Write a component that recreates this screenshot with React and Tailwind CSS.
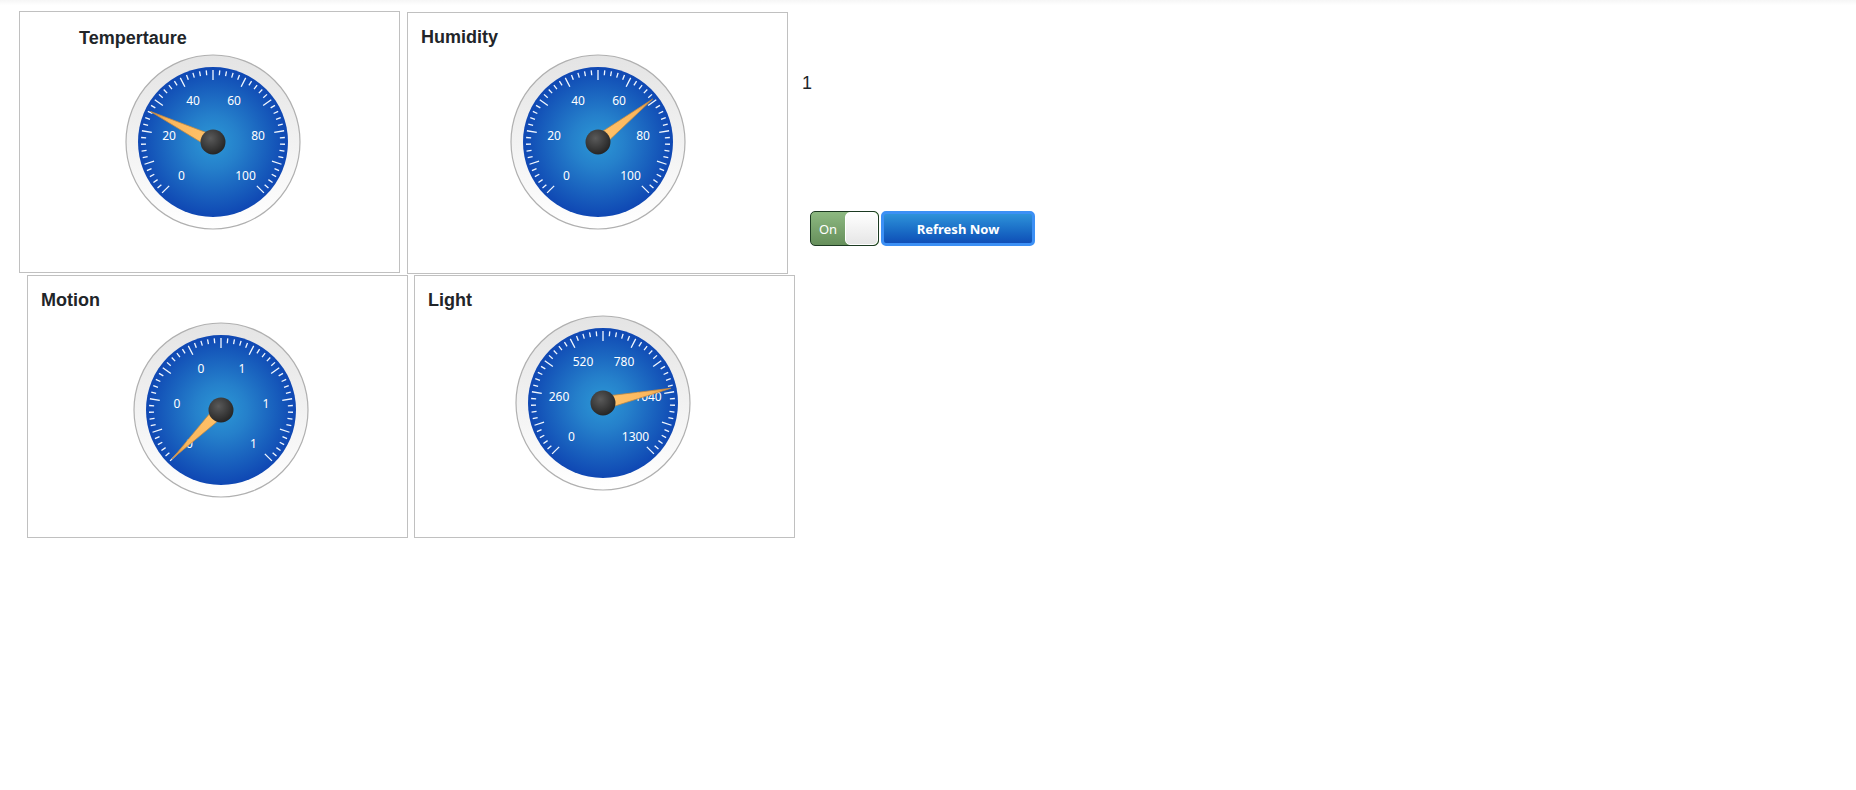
import { useId, useState } from 'react';

const CENTER = 88;
const START = -135;
const SWEEP = 270;

const LABEL_POINTS = [
  [-31.5, 34],
  [-44, -6.5],
  [-20, -41.5],
  [21, -41.5],
  [45, -6.5],
  [32.5, 34],
];

function polar(angle, radius) {
  const rad = (angle * Math.PI) / 180;
  return [CENTER + radius * Math.sin(rad), CENTER - radius * Math.cos(rad)];
}

function Gauge({ name, labels, ratio }) {
  const id = useId();
  const ticks = Array.from({ length: 51 }, (_, i) => {
    const angle = START + (SWEEP * i) / 50;
    const major = i % 5 === 0;
    const [x1, y1] = polar(angle, major ? 62 : 67);
    const [x2, y2] = polar(angle, 72);
    return <line key={i} x1={x1} y1={y1} x2={x2} y2={y2} stroke="#f2f8ff" strokeWidth="1.3" />;
  });

  return (
    <svg viewBox="0 0 176 176" className="size-44 shrink-0" role="img" aria-label={name}>
      <defs>
        <linearGradient id={`${id}rim`} x1="0" y1="0" x2="0" y2="1">
          <stop offset="0" stopColor="#e4e4e4" />
          <stop offset="1" stopColor="#ffffff" />
        </linearGradient>
        <radialGradient id={`${id}face`}>
          <stop offset="0" stopColor="#2c98d6" />
          <stop offset="0.35" stopColor="#2580cb" />
          <stop offset="1" stopColor="#0f47b3" />
        </radialGradient>
        <linearGradient id={`${id}needle`} x1="0" y1="1" x2="0" y2="0">
          <stop offset="0" stopColor="#ffc36b" />
          <stop offset="0.7" stopColor="#fbb75d" />
          <stop offset="1" stopColor="#d9923f" />
        </linearGradient>
        <radialGradient id={`${id}hub`} cx="0.4" cy="0.35" r="0.65">
          <stop offset="0" stopColor="#5a5a5a" />
          <stop offset="1" stopColor="#262626" />
        </radialGradient>
      </defs>
      <circle cx="88" cy="88" r="87" fill={`url(#${id}rim)`} stroke="#b0b0b0" strokeWidth="1.2" />
      <circle cx="88" cy="88" r="75" fill={`url(#${id}face)`} />
      {ticks}
      {labels.map((label, i) => (
        <text
          key={i}
          x={CENTER + LABEL_POINTS[i][0]}
          y={CENTER + LABEL_POINTS[i][1] + 4.3}
          textAnchor="middle"
          className="fill-white font-['Noto_Sans','Open_Sans',sans-serif] text-[12px]"
        >
          {label}
        </text>
      ))}
      <path
        d="M81.5 88 L88 18.5 L94.5 88 Z"
        fill={`url(#${id}needle)`}
        stroke="#c98a3c"
        strokeWidth="0.7"
        transform={`rotate(${START + SWEEP * ratio} 88 88)`}
      />
      <circle cx="88" cy="88" r="12.5" fill={`url(#${id}hub)`} />
    </svg>
  );
}

function Panel({ title, labels, ratio, className = '', headingClass = 'pt-3 pl-[13px]', gaugeClass }) {
  return (
    <section className={`w-[381px] shrink-0 border border-[#c0c0c0] ${className}`}>
      <h2 className={`text-[18px] leading-6 font-bold ${headingClass}`}>{title}</h2>
      <div className={gaugeClass}>
        <Gauge name={title} labels={labels} ratio={ratio} />
      </div>
    </section>
  );
}

function PowerSwitch() {
  const [on, setOn] = useState(true);
  return (
    <label
      className={`relative flex h-[35px] w-[69px] cursor-pointer overflow-hidden rounded-[5px] border border-[#1c3a22] bg-linear-to-b from-[#8db981] to-[#668f5b] font-['Noto_Sans','Open_Sans',sans-serif] text-[13px] text-white ${on ? '' : 'flex-row-reverse'}`}
    >
      <input type="checkbox" className="sr-only" checked={on} onChange={() => setOn(!on)} />
      <span className="flex flex-1 items-center justify-center pt-0.5">{on ? 'On' : 'Off'}</span>
      <span className="w-[33px] rounded-[5px] border border-white bg-linear-to-b from-white to-[#e6e6e6]" />
    </label>
  );
}

export default function App() {
  const percent = [0, 20, 40, 60, 80, 100];
  return (
    <div className="min-h-screen bg-white font-['Liberation_Sans',Arial,sans-serif] text-[#212529]">
      <div className="h-[11px] bg-linear-to-b from-[#f6f6f6] to-white to-50%" />
      <main>
        <div className="flex items-start pl-[19px]">
          <Panel
            title="Tempertaure"
            labels={percent}
            ratio={0.263}
            className="h-[262px]"
            headingClass="pt-[14px] pl-[59px]"
            gaugeClass="pt-1 pl-[105px]"
          />
          <Panel
            title="Humidity"
            labels={percent}
            ratio={0.692}
            className="mt-px ml-[7px] h-[262px]"
            gaugeClass="pt-[5px] pl-[102px]"
          />
          <div className="pt-[60px] pl-[14px]">
            <p className="text-[18px] leading-6">1</p>
            <div className="mt-[116px] flex gap-0.5 pl-2">
              <PowerSwitch />
              <button
                type="button"
                className="h-[35px] w-[154px] cursor-pointer rounded-[5px] border-3 border-[#3c90f5] bg-linear-to-b from-[#3399dd] to-[#0f47b3] bg-origin-border pt-0.5 font-['Noto_Sans','Open_Sans',sans-serif] text-[13px] font-bold text-white"
              >
                Refresh Now
              </button>
            </div>
          </div>
        </div>
        <div className="mt-px flex items-start gap-1.5 pl-[27px]">
          <Panel
            title="Motion"
            labels={[0, 0, 0, 1, 1, 1]}
            ratio={0}
            className="h-[263px]"
            gaugeClass="pt-[10px] pl-[105px]"
          />
          <Panel
            title="Light"
            labels={[0, 260, 520, 780, 1040, 1300]}
            ratio={0.788}
            className="h-[263px]"
            gaugeClass="pt-[3px] pl-[100px]"
          />
        </div>
      </main>
    </div>
  );
}
